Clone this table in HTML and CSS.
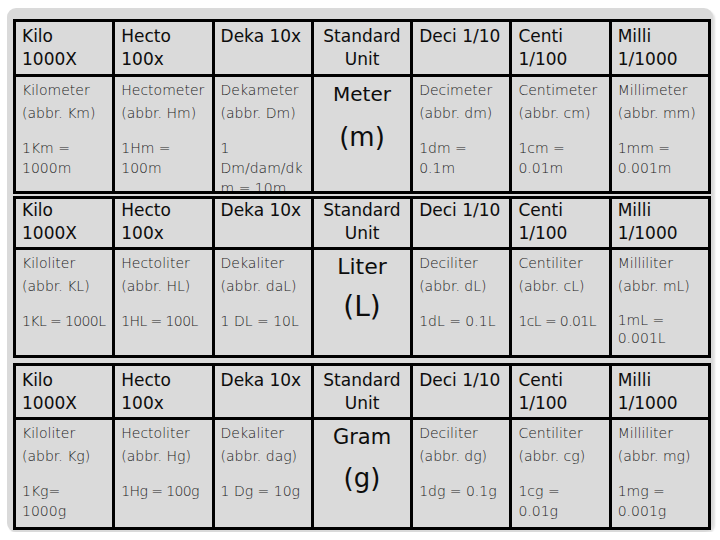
FILE: index.html
```html
<!DOCTYPE html>
<html lang="en">
<head>
<meta charset="utf-8">
<title>Metric Prefixes</title>
<link rel="stylesheet" href="styles.css">
</head>
<body>
<div class="panel">

  <div class="sheet s1">
    <div class="hd">Kilo<br>1000X</div>
    <div class="hd">Hecto<br>100x</div>
    <div class="hd">Deka 10x</div>
    <div class="hd center">Standard<br>Unit</div>
    <div class="hd">Deci 1/10</div>
    <div class="hd">Centi<br>1/100</div>
    <div class="hd">Milli<br>1/1000</div>

    <div class="bd"><p class="nm">Kilometer<br>(abbr. Km)</p><p class="val">1Km =<br>1000m</p></div>
    <div class="bd"><p class="nm">Hectometer<br>(abbr. Hm)</p><p class="val">1Hm =<br>100m</p></div>
    <div class="bd"><p class="nm">Dekameter<br>(abbr. Dm)</p><p class="val">1<br>Dm/dam/dk<br>m = 10m</p></div>
    <div class="bd std"><div class="big">Meter</div><div class="sym">(m)</div></div>
    <div class="bd"><p class="nm">Decimeter<br>(abbr. dm)</p><p class="val">1dm =<br>0.1m</p></div>
    <div class="bd"><p class="nm">Centimeter<br>(abbr. cm)</p><p class="val">1cm =<br>0.01m</p></div>
    <div class="bd"><p class="nm">Millimeter<br>(abbr. mm)</p><p class="val">1mm =<br>0.001m</p></div>
  </div>

  <div class="sheet s2">
    <div class="hd">Kilo<br>1000X</div>
    <div class="hd">Hecto<br>100x</div>
    <div class="hd">Deka 10x</div>
    <div class="hd center">Standard<br>Unit</div>
    <div class="hd">Deci 1/10</div>
    <div class="hd">Centi<br>1/100</div>
    <div class="hd">Milli<br>1/1000</div>

    <div class="bd"><p class="nm">Kiloliter<br>(abbr. KL)</p><p class="val tight">1KL = 1000L</p></div>
    <div class="bd"><p class="nm">Hectoliter<br>(abbr. HL)</p><p class="val tight">1HL = 100L</p></div>
    <div class="bd"><p class="nm">Dekaliter<br>(abbr. daL)</p><p class="val">1 DL = 10L</p></div>
    <div class="bd std"><div class="big">Liter</div><div class="sym">(L)</div></div>
    <div class="bd"><p class="nm">Deciliter<br>(abbr. dL)</p><p class="val">1dL = 0.1L</p></div>
    <div class="bd"><p class="nm">Centiliter<br>(abbr. cL)</p><p class="val tight">1cL = 0.01L</p></div>
    <div class="bd"><p class="nm">Milliliter<br>(abbr. mL)</p><p class="val short">1mL =<br>0.001L</p></div>
  </div>

  <div class="sheet s3">
    <div class="hd">Kilo<br>1000X</div>
    <div class="hd">Hecto<br>100x</div>
    <div class="hd">Deka 10x</div>
    <div class="hd center">Standard<br>Unit</div>
    <div class="hd">Deci 1/10</div>
    <div class="hd">Centi<br>1/100</div>
    <div class="hd">Milli<br>1/1000</div>

    <div class="bd"><p class="nm">Kiloliter<br>(abbr. Kg)</p><p class="val">1Kg=<br>1000g</p></div>
    <div class="bd"><p class="nm">Hectoliter<br>(abbr. Hg)</p><p class="val tight">1Hg = 100g</p></div>
    <div class="bd"><p class="nm">Dekaliter<br>(abbr. dag)</p><p class="val">1 Dg = 10g</p></div>
    <div class="bd std"><div class="big">Gram</div><div class="sym">(g)</div></div>
    <div class="bd"><p class="nm">Deciliter<br>(abbr. dg)</p><p class="val">1dg = 0.1g</p></div>
    <div class="bd"><p class="nm">Centiliter<br>(abbr. cg)</p><p class="val">1cg =<br>0.01g</p></div>
    <div class="bd"><p class="nm">Milliliter<br>(abbr. mg)</p><p class="val">1mg =<br>0.001g</p></div>
  </div>

</div>
</body>
</html>
```

FILE: styles.css
```css
html, body {
  margin: 0;
  padding: 0;
  background: #ffffff;
}

body {
  font-family: "DejaVu Sans", "Liberation Sans", sans-serif;
  color: #111111;
}

.panel {
  box-sizing: border-box;
  width: 706px;
  height: 524px;
  margin: 8px 0 0 7px;
  padding: 11px 2px 2px 6px;
  background: #dadada;
  border-radius: 9px;
  box-shadow: 2px 2px 2px rgba(0, 0, 0, 0.12);
}

.sheet {
  box-sizing: border-box;
  width: 698px;
  display: grid;
  grid-template-columns: repeat(7, 1fr);
  gap: 3px;
  padding: 3px;
  background: #000000;
}

.s1 { grid-template-rows: 52px 114px; }
.s2 { grid-template-rows: 48px 105px; margin-top: 2px; }
.s3 { grid-template-rows: 51px 107px; margin-top: 5px; }

.hd, .bd {
  background: #dadada;
  overflow: hidden;
  min-width: 0;
}

.hd {
  font-size: 17px;
  line-height: 23px;
  padding: 3px 2px 0 6px;
  color: #0d0d0d;
  white-space: nowrap;
}

.s2 .hd { padding-top: 0; }
.s3 .hd { padding-top: 3px; }

.hd.center {
  text-align: center;
  padding-left: 2px;
}

.bd {
  padding: 2px 2px 0 6px;
  font-size: 14px;
  font-weight: 300;
  color: #1c1c1c;
}

.nm {
  margin: 0;
  line-height: 23px;
  white-space: nowrap;
}

.val {
  margin: 13px 0 0 0;
  line-height: 20px;
  white-space: nowrap;
}

.val.tight {
  letter-spacing: -0.6px;
}

.val.short {
  line-height: 18px;
}

.bd.std {
  padding: 0;
  text-align: center;
  color: #0d0d0d;
  font-weight: 400;
}

.big {
  font-size: 20px;
  line-height: 34px;
}

.sym {
  font-size: 26px;
  line-height: 52px;
}

.s2 .big { font-size: 22px; }
.s2 .sym { font-size: 28px; line-height: 46px; }
.s3 .big { font-size: 21px; }
.s3 .sym { font-size: 26px; line-height: 48px; }
```
